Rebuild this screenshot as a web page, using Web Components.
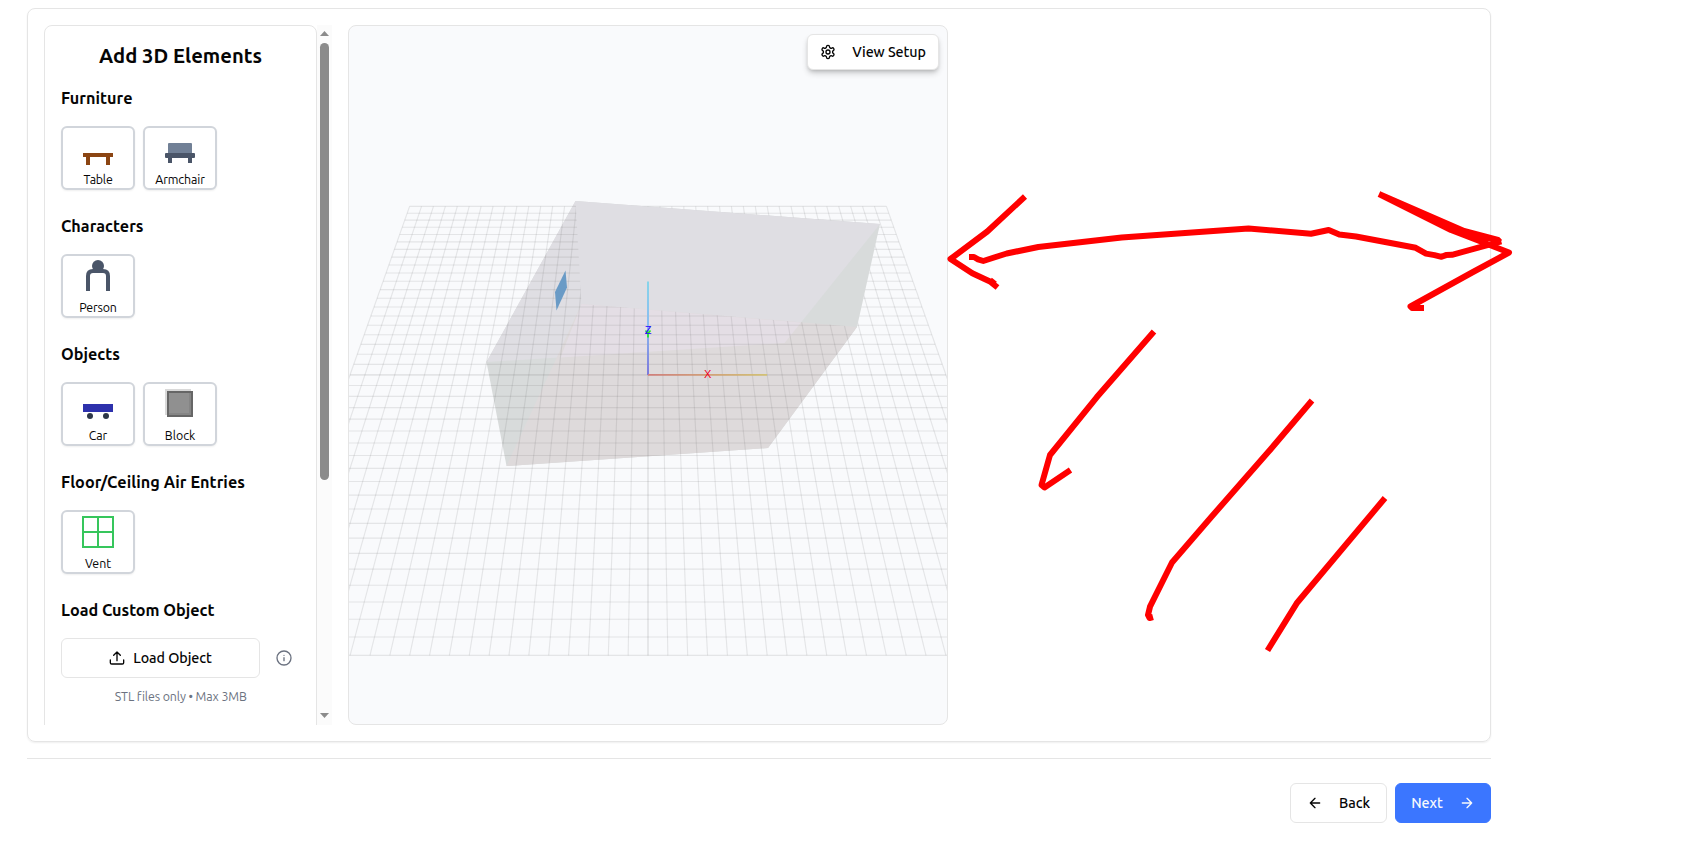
<!DOCTYPE html>
<html lang="en">
<head>
<meta charset="utf-8">
<title>Add 3D Elements</title>
<style>
html,body{margin:0;padding:0;background:#fff;height:855px;overflow:hidden}
body{font-family:Ubuntu,"Noto Sans",sans-serif;color:#050505}
</style>
</head>
<body>
<setup-page></setup-page>
<script>
function define(name, html, ready) {
  const t = document.createElement('template');
  t.innerHTML = html;
  customElements.define(name, class extends HTMLElement {
    connectedCallback() {
      if (this.shadowRoot) return;
      this.attachShadow({ mode: 'open' }).append(t.content.cloneNode(true));
      if (ready) ready.call(this, this.shadowRoot);
    }
  });
}

/* Text set to a fixed measure by adjusting its tracking. */
define('fit-text', `<style>:host{display:inline-block;white-space:nowrap}span{display:inline-block}</style><span><slot></slot></span>`, function (root) {
  const want = +this.getAttribute('measure'), s = root.querySelector('span');
  this.style.width = want + 'px';
  const n = this.textContent.length;
  s.style.letterSpacing = ((want - s.getBoundingClientRect().width) / n) + 'px';
});

const ICONS = {
  table: '<g fill="#8b4513"><path d="M5 25h30v4H5zM8 29h4v8H8zM28 29h4v8h-4z"/></g>',
  armchair: '<rect x="8" y="15" width="24" height="12" rx="1" fill="#718096"/><g fill="#4a5568"><rect x="5" y="25" width="30" height="5" rx="1"/><path d="M8 30h4v5H8zM28 30h4v5h-4z"/></g>',
  person: '<circle cx="20" cy="10" r="6" fill="#4a5568"/><path d="M10 35V20q0-5 5-5h10q5 0 5 5v15" fill="none" stroke="#4a5568" stroke-width="4"/>',
  car: '<path d="M5 20h30v8H5z" fill="#2d31ac"/><g fill="#2d3748"><circle cx="12" cy="32" r="3"/><circle cx="28" cy="32" r="3"/></g>',
  block: '<path d="M5 5h26v26H5z" fill="#d9d9d9"/><path d="M8 8h24v24H8z" fill="#858585" stroke="#666" stroke-width="2"/><path d="M9 9h20v20H9z" fill="#909090"/>',
  vent: '<path d="M5 5h30v30H5zM20 5v30M5 20h30" fill="none" stroke="#36c65c" stroke-width="2"/>'
};

define('element-tile', `<style>
:host{box-sizing:border-box;width:74px;height:64px;border:2px solid #d1d5db;border-radius:6px;background:#fff;display:flex;flex-direction:column;align-items:center;box-shadow:0 1px 2px #0001}
svg{width:40px;height:44px;flex:none}
div{font-size:12.4px;line-height:16px;height:16px;margin-top:-1px}
</style><svg viewBox="0 0 40 44"></svg><div><slot></slot></div>`, function (root) {
  root.querySelector('svg').innerHTML = ICONS[this.getAttribute('icon')];
});

define('element-group', `<style>
:host{display:flex;flex-direction:column;gap:16px}
h3{margin:0;font-size:16.2px;line-height:24px;font-weight:700;height:24px}
div{display:flex;gap:8px}
</style><h3><slot name="title"></slot></h3><div><slot></slot></div>`);

define('scroll-bar', `<style>
:host{width:15px;background:#fbfbfb;display:flex;flex-direction:column;align-items:center}
svg{width:15px;height:18px;flex:none}
i{width:9px;height:437px;border-radius:5px;background:#8b8b8b}
b{flex:1}
</style><svg viewBox="0 0 15 18"><path d="M3 11l4.5-5 4.5 5z" fill="#8b8b8b"/></svg><i></i><b></b><svg viewBox="0 0 15 18"><path d="M3 6l4.5 5L12 6z" fill="#8b8b8b"/></svg>`);

define('ui-button', `<style>
:host{box-sizing:border-box;height:40px;border:1px solid #e5e5e5;border-radius:6px;background:#fff;display:flex;align-items:center;justify-content:center;font-size:14.3px;line-height:20px;font-weight:560}
:host([primary]){background:#3b76ff;border-color:#3b76ff;color:#f8fafc;font-weight:500}
::slotted(svg){width:16px;height:16px;flex:none;fill:none;stroke:currentColor;stroke-width:2;stroke-linecap:round;stroke-linejoin:round}
::slotted(fit-text){position:relative;top:-.5px}
</style><slot></slot>`);

define('element-sidebar', `<style>
:host{width:288px;height:700px;overflow:hidden;display:flex}
section{box-sizing:border-box;width:273px;height:760px;border:1px solid #e5e5e5;border-radius:8px;padding:16px;display:flex;flex-direction:column}
h2{margin:0 0 16px;text-align:center;font-size:20.2px;font-weight:700;line-height:28px;height:28px}
.groups{display:flex;flex-direction:column;gap:24px}
.load{display:flex;align-items:center;width:239px}
.load ui-button{width:199px;gap:8px}
.info{width:16px;height:16px;margin-left:16px;fill:none;stroke:#6b7280;stroke-width:2;stroke-linecap:round}
p{margin:10px 0 0;text-align:center;font-size:12.4px;line-height:16px;color:#6b7280}
</style>
<section>
<h2><fit-text measure="163">Add 3D Elements</fit-text></h2>
<div class="groups">
<element-group><fit-text slot="title" measure="71.5">Furniture</fit-text>
<element-tile icon="table"><fit-text measure="29">Table</fit-text></element-tile><element-tile icon="armchair"><fit-text measure="49.5">Armchair</fit-text></element-tile></element-group>
<element-group><fit-text slot="title" measure="82.5">Characters</fit-text>
<element-tile icon="person"><fit-text measure="37.5">Person</fit-text></element-tile></element-group>
<element-group><fit-text slot="title" measure="59">Objects</fit-text>
<element-tile icon="car"><fit-text measure="18.5">Car</fit-text></element-tile><element-tile icon="block"><fit-text measure="30.5">Block</fit-text></element-tile></element-group>
<element-group><fit-text slot="title" measure="184">Floor/Ceiling Air Entries</fit-text>
<element-tile icon="vent"><fit-text measure="26">Vent</fit-text></element-tile></element-group>
<element-group><fit-text slot="title" measure="153.5">Load Custom Object</fit-text>
<div class="load"><ui-button><svg viewBox="0 0 24 24"><path d="M12 16V3M7 8l5-5 5 5M2 15v4a2 2 0 0 0 2 2h16a2 2 0 0 0 2-2v-4"/></svg><fit-text measure="78.5">Load Object</fit-text></ui-button>
<svg class="info" viewBox="0 0 24 24"><circle cx="12" cy="12" r="10.5"/><path d="M12 16v-4.500M12 8h.01"/></svg></div></element-group>
</div>
<p><fit-text measure="131.500">STL files only • Max 3MB</fit-text></p>
</section><scroll-bar></scroll-bar>`);

/* Perspective room view; the drawing uses page-sized coordinates, offset by its viewBox. */
define('room-viewport', `<style>
:host{box-sizing:border-box;width:600px;height:700px;border:1px solid #e5e5e5;border-radius:8px;background:#f9fafc;position:relative;overflow:hidden;display:block}
svg.scene{display:block;width:598px;height:698px}
ui-button{position:absolute;top:8px;right:8px;width:132px;height:36px;gap:16px;border-color:#e5e5e5;box-shadow:0 4px 6px -1px #0003,0 2px 4px -2px #0003}
ui-button svg{width:16px;height:16px}
text{font:11px "Liberation Sans",sans-serif;text-anchor:middle}
</style>
<svg class="scene" viewBox="349 26 598 698">
<defs>
<linearGradient id="zg" gradientUnits="userSpaceOnUse" x1="0" x2="0" y1="281" y2="375"><stop stop-color="#86d5ea"/><stop offset=".45" stop-color="#8bbdf0"/><stop offset="1" stop-color="#7c78dc"/></linearGradient>
<linearGradient id="xg" gradientUnits="userSpaceOnUse" x1="648" x2="767" y1="0" y2="0"><stop stop-color="#d07f7c"/><stop offset="1" stop-color="#d2c275"/></linearGradient>
<clipPath id="open"><path clip-rule="evenodd" d="M349 26h598v698H349zM575.500 201L880 224 857 327 581.500 304z"/></clipPath>
</defs>
<path d="M575.500 201L880 224 857 327 768 448 506.500 466 486.500 362z" fill="#d8dbdb"/>
<path d="M575.500 201L880 224 784.500 343 486.500 362z" fill="#dfdee3"/>
<path d="M581.500 304L857 327 768 448 506.500 466z" fill="#dedadb"/>
<path d="M581.500 304L801 322.500 784.500 343 560.500 357.500z" fill="#e4dee5"/>
<g id="grid" clip-path="url(#open)" stroke="#5a5a5a" stroke-opacity=".125" stroke-width="1"></g>
<path d="M565.500 270.500l1.500 17-10.500 23-1.500-18.500z" fill="#6a9bc6"/>
<path d="M648 281.500V375" stroke="url(#zg)" stroke-width="2"/>
<path d="M648 374.800H767" stroke="#cca" stroke-width="1.800" style="stroke:url(#xg)"/>
<path d="M645.500 330.500l2.500 3 2.500-3M648 333v4.500" fill="none" stroke="#1fe81f" stroke-width="1.600"/>
<text x="648" y="334" fill="#2600ff">Z</text>
<text x="707.700" y="378" fill="#f0001c">X</text>
</svg>
<ui-button><svg viewBox="0 0 24 24"><path d="M12.220 2h-.44a2 2 0 0 0-2 2v.18a2 2 0 0 1-1 1.730l-.43.25a2 2 0 0 1-2 0l-.15-.08a2 2 0 0 0-2.730.73l-.22.38a2 2 0 0 0 .73 2.730l.15.1a2 2 0 0 1 1 1.720v.51a2 2 0 0 1-1 1.740l-.15.09a2 2 0 0 0-.73 2.730l.22.38a2 2 0 0 0 2.730.73l.15-.08a2 2 0 0 1 2 0l.43.25a2 2 0 0 1 1 1.730V20a2 2 0 0 0 2 2h.44a2 2 0 0 0 2-2v-.18a2 2 0 0 1 1-1.730l.43-.25a2 2 0 0 1 2 0l.15.08a2 2 0 0 0 2.730-.73l.22-.39a2 2 0 0 0-.73-2.730l-.15-.08a2 2 0 0 1-1-1.740v-.5a2 2 0 0 1 1-1.740l.15-.09a2 2 0 0 0 .73-2.730l-.22-.38a2 2 0 0 0-2.730-.73l-.15.08a2 2 0 0 1-2 0l-.43-.25a2 2 0 0 1-1-1.730V4a2 2 0 0 0-2-2z"/><circle cx="12" cy="12" r="3"/></svg><fit-text measure="73.500">View Setup</fit-text></ui-button>`, function (root) {
  const top = 206.4, bottom = 655.4, near = 19.86, far = 11.92, cx = 648;
  let out = '';
  for (let i = 0; i <= 40; i++) {
    const s = 1 / (1 / far + (1 / near - 1 / far) * i / 40);
    const y = top + (s - far) * (bottom - top) / (near - far);
    const w = i === 20 ? 1.8 : 1.1;
    out += `<path stroke-width="${w}" d="M${cx - 20 * s} ${y}H${cx + 20 * s}"/>`;
    const k = i - 20;
    out += `<path stroke-width="${w}" d="M${cx + k * far} ${top}L${cx + k * near} ${bottom}"/>`;
  }
  root.getElementById('grid').innerHTML = out;
});

define('pen-marks', `<style>:host{position:absolute;inset:0;pointer-events:none}svg{display:block;width:1696px;height:855px}</style>
<svg viewBox="0 0 1696 855" fill="none" stroke="#f00" stroke-width="6" stroke-linejoin="round">
<path d="M1025 196.500L987.300 231.500 950.500 259 972.300 273.300 990 281.500 997.500 287.500M990 280l5 4"/>
<path d="M969 257h5l4 2.300 5.300 1.700 23.400-7.500 31.600-6.500 83.400-9.500 126.800-9 62.500 5.300 17.700-3.800 10.600 4.500 16.700 2 59.700 11.300 10.300 5.800 8.500 1.500 7 1.700 4.500-1.700 6-.3 36.300-10 13-3.500"/>
<path d="M1379 194L1464 231 1498 240 1500 242M1379 194L1451 230 1479.500 241 1509 252.500 1473 272 1410.500 306.500 1412 308H1424"/>
<path d="M1379 194L1464 231 1498 241 1479.500 241 1451 230z" fill="#f00" stroke="none"/>
<path d="M1154 331.500L1096.700 397.300 1050 455 1041.500 485 1044.500 487.500 1070.500 470"/>
<path d="M1312 400.500L1270 450 1211.700 516.500 1172 562.500 1150 606.700 1148 615 1149.500 618 1153 617"/>
<path d="M1385 498L1296.700 603.300 1267.500 650.500"/>
</svg>`);

define('setup-page', `<style>
:host{display:block;box-sizing:border-box;position:relative;width:1696px;height:855px;padding:8px 205px 0 27px}
main{box-sizing:border-box;height:734px;border:1px solid #e5e5e5;border-radius:8px;padding:16px;display:flex;gap:16px;box-shadow:0 1px 2px #0001}
footer{margin-top:16px;padding-top:24px;border-top:1px solid #e5e5e5;display:flex;justify-content:flex-end;gap:8px}
.back{width:97px;gap:16px}.next{width:96px;gap:16px}
</style>
<main><element-sidebar></element-sidebar><room-viewport></room-viewport></main>
<footer><ui-button class="back"><svg viewBox="0 0 24 24"><path d="M12 19l-7-7 7-7M19 12H5"/></svg><fit-text measure="31">Back</fit-text></ui-button>
<ui-button class="next" primary><fit-text measure="31.500">Next</fit-text><svg viewBox="0 0 24 24"><path d="M5 12h14M12 5l7 7-7 7"/></svg></ui-button></footer>
<pen-marks></pen-marks>`);
</script>
</body>
</html>
